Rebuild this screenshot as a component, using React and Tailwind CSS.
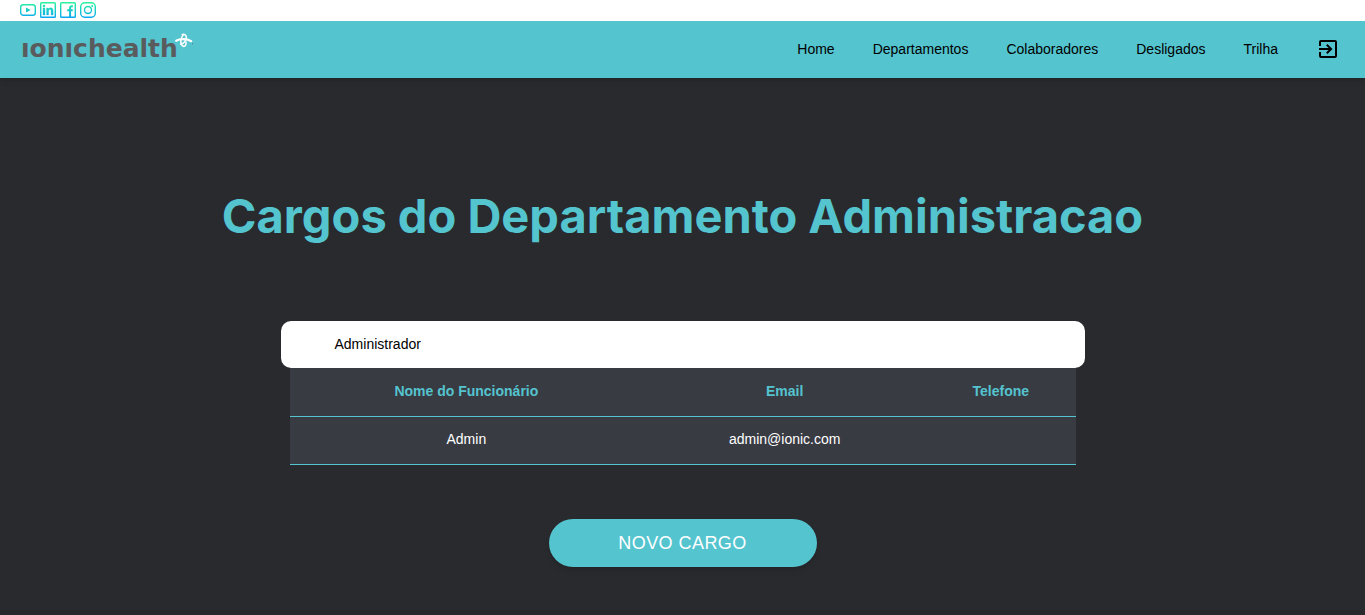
import { MdExitToApp } from "react-icons/md";

const links = ["Home", "Departamentos", "Colaboradores", "Desligados", "Trilha"];

const employees = [{ name: "Admin", email: "admin@ionic.com", phone: "" }];

function SocialIcon({ label, children }) {
  return (
    <a href="#" aria-label={label}>
      <svg className="size-4" viewBox="0 0 16 16" fill="none" stroke="url(#social)" strokeWidth="1.4">
        {children}
      </svg>
    </a>
  );
}

function SocialBar() {
  return (
    <div className="flex h-[21px] items-start gap-1 bg-white px-5 pt-0.5">
      <svg className="absolute size-0" aria-hidden="true">
        <defs>
          <linearGradient id="social" gradientUnits="userSpaceOnUse" x1="0" y1="0" x2="0" y2="16">
            <stop offset="0" stopColor="#2af598" />
            <stop offset="1" stopColor="#08a5f5" />
          </linearGradient>
        </defs>
      </svg>
      <SocialIcon label="YouTube">
        <rect x="0.7" y="2.7" width="14.6" height="10.6" rx="2.6" />
        <path d="M6 5.400v5.200l4.600-2.600z" fill="url(#social)" stroke="none" />
      </SocialIcon>
      <SocialIcon label="LinkedIn">
        <rect x="0.7" y="0.7" width="14.6" height="14.6" rx="0.8" />
        <path
          d="M3 6h2v7H3zM3 3h2v2H3zM6.6 6h1.9v1c.5-.8 1.2-1.2 2.1-1.2 1.7 0 2.5 1 2.5 2.9V13h-2V9.1c0-1-.4-1.5-1.1-1.5-.9 0-1.4.6-1.4 1.6V13h-2z"
          fill="url(#social)"
          strokeWidth="0.3"
        />
      </SocialIcon>
      <SocialIcon label="Facebook">
        <rect x="0.7" y="0.7" width="14.6" height="14.6" rx="0.8" />
        <path d="M12.9 4.2h-1.3c-1 0-1.5.5-1.5 1.5V15M7.2 8.3h5.5" strokeWidth="2" />
      </SocialIcon>
      <SocialIcon label="Instagram">
        <rect x="0.7" y="0.7" width="14.6" height="14.6" rx="4" />
        <circle cx="8" cy="8" r="3.5" />
        <circle cx="12.2" cy="3.9" r="1" fill="url(#social)" stroke="none" />
      </SocialIcon>
    </div>
  );
}

function Logo() {
  return (
    <a href="#" aria-label="ionichealth" className="flex items-start">
      <span className="font-['DejaVu_Sans',sans-serif] text-[25px]/8 font-bold text-[#5a5b5d]">
        ıonıchealth
      </span>
      <svg className="-ml-1 size-5" viewBox="0 0 20 20" fill="none" stroke="#fff" strokeLinecap="round">
        <path d="M2.200 7.800C6 5.600 13 5.600 17.200 8.200" strokeWidth="2.200" />
        <path d="M8.200 1.700C10.600.6 13 2.600 12.200 5.600 11.500 8.400 9.300 10.600 6.600 11.400" strokeWidth="1.500" />
        <path d="M9.200 2C6.200 5 5.800 11.500 9.200 13.300 11.200 13.800 12.400 11.500 12 9" strokeWidth="1.500" />
        <circle cx="18.500" cy="10.800" r="0.500" fill="#5a5b5d" stroke="none" />
      </svg>
    </a>
  );
}

export default function App() {
  return (
    <div className="flex min-h-screen flex-col bg-[#292a2d] font-['Liberation_Sans',Arial,sans-serif] text-sm">
      <SocialBar />
      <header className="flex h-[57px] items-center justify-between bg-[#54c4cf] pr-[25px] pb-0.5 pl-[21px] shadow-md">
        <Logo />
        <nav className="flex items-center gap-[38px] text-black">
          {links.map((label) => (
            <a key={label} href="#">
              {label}
            </a>
          ))}
          <a href="#" aria-label="Sair">
            <MdExitToApp className="size-6" />
          </a>
        </nav>
      </header>
      <main className="flex flex-col items-center px-4 pt-[108px] pb-12">
        <h1 className="text-center font-[Inter,sans-serif] text-[47px]/[60px] font-bold text-[#54c4cf]">
          Cargos do Departamento Administracao
        </h1>
        <section className="mt-[75px] w-full max-w-[804px]">
          <button
            type="button"
            aria-expanded="true"
            className="block h-[47px] w-full rounded-[10px] bg-white px-[54px] pb-0.5 text-left text-black"
          >
            Administrador
          </button>
          <div className="px-[9px]">
            <table className="w-full table-fixed border-collapse bg-[#393b43] text-center text-white">
              <thead>
                <tr className="h-12 border-b border-[#54c4cf] text-[#54c4cf]">
                  <th className="w-[45%] pb-0.5">Nome do Funcionário</th>
                  <th className="w-[36%] pb-0.5">Email</th>
                  <th className="pb-0.5">Telefone</th>
                </tr>
              </thead>
              <tbody>
                {employees.map((employee) => (
                  <tr key={employee.email} className="h-12 border-b border-[#54c4cf]">
                    <td className="pb-0.5">{employee.name}</td>
                    <td className="pb-0.5">{employee.email}</td>
                    <td className="pb-0.5">{employee.phone}</td>
                  </tr>
                ))}
              </tbody>
            </table>
          </div>
        </section>
        <button
          type="button"
          className="mt-[54px] h-12 w-[268px] rounded-full bg-[#54c4cf] text-lg tracking-wide text-white uppercase shadow-md"
        >
          Novo Cargo
        </button>
      </main>
    </div>
  );
}
